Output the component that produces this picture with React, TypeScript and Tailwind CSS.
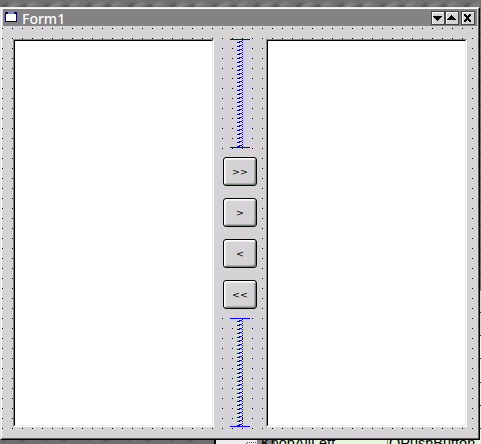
import React from "react";

function Spring({ id }: { id: string }) {
  return (
    <svg width="20" height="109" className="block shrink-0" shapeRendering="crispEdges">
      <defs>
        <pattern id={id} x="7" y="1" width="6" height="4" patternUnits="userSpaceOnUse">
          <path d="M0 3h2v1h-2zM2 0h2v1h-2zM5 1h1v1h-1z" fill="#fff" />
          <path d="M5 0h1v1h-1zM2 1h3v1h-3zM0 2h3v1h-3zM5 2h1v1h-1z" fill="#0000ff" />
        </pattern>
      </defs>
      <rect x="7" y="1" width="6" height="107" fill={`url(#${id})`} />
      <path d="M0 0h20v1h-20zM0 108h20v1h-20z" fill="#0000ff" />
    </svg>
  );
}

function ListPanel() {
  return (
    <div className="h-[388px] w-[201px] shrink-0 border border-t-[#848284] border-r-white border-b-white border-l-[#848284]">
      <div className="h-full border border-t-black border-r-[#efebef] border-b-[#efebef] border-l-black bg-white" />
    </div>
  );
}

function MoveButton({ dir, double }: { dir: "left" | "right"; double?: boolean }) {
  const label = (dir === "right" ? ">" : "<").repeat(double ? 2 : 1);
  return (
    <button className="flex h-[29px] w-[34px] shrink-0 items-center justify-center rounded-[3px] border border-black bg-[#d6d3d6] pt-px font-['DejaVu_Sans',sans-serif] text-[9.5px] leading-none text-black shadow-[inset_1px_1px_0_#fff,inset_-1px_-1px_0_#738173,inset_2px_2px_0_#efebef,inset_-2px_-2px_0_#adaaad]">
      {label}
    </button>
  );
}

function TitleButton({ kind }: { kind: "down" | "up" | "close" }) {
  const paths = {
    down: "M2 5h9v1h-1v1h-1v1h-1v1h-1v1h-1v-1h-1v-1h-1v-1h-1v-1h-1z",
    up: "M6 4h1v1h1v1h1v1h1v1h1v1h-9v-1h1v-1h1v-1h1v-1h1z",
    close: "M3 3h2v1h1v1h1v-1h1v-1h2v2h-1v1h-1v2h1v1h1v2h-2v-1h-1v-1h-1v1h-1v1h-2v-2h1v-1h1v-2h-1v-1h-1z",
  };
  return (
    <svg width="14" height="14" className="block" shapeRendering="crispEdges">
      <rect width="14" height="14" fill="#424542" />
      <rect x="1" y="1" width="12" height="12" fill="#fff" />
      <rect x="2" y="2" width="11" height="11" fill="#d6d3d6" />
      <path d={paths[kind]} fill="#000" />
    </svg>
  );
}

export default function App() {
  return (
    <div className="relative h-[444px] w-[481px] overflow-hidden bg-[#6b6d6b]">
      <svg width="481" height="444" className="absolute inset-0">
        <defs>
          <filter id="soft" x="-20%" y="-40%" width="140%" height="180%">
            <feGaussianBlur stdDeviation="1.3" />
          </filter>
          <pattern id="stone" width="42" height="12" patternUnits="userSpaceOnUse">
            <rect width="42" height="12" fill="#6f706f" />
            <g filter="url(#soft)">
              <path d="M6 7L16 2L21 3L12 8zM25 5L34 2L39 3L30 7z" fill="#848584" />
              <path d="M1 7L6 3L9 4L4 9zM18 8L25 4L28 6L21 10z" fill="#525452" />
            </g>
          </pattern>
        </defs>
        <rect width="481" height="444" fill="url(#stone)" />
        <rect x="214" y="439" width="267" height="5" fill="#e7f7de" />
        <rect x="214" y="439" width="2" height="5" />
        <rect x="216" y="439" width="42" height="5" fill="#efebef" />
        <path d="M246.500 444v-1.500h10" fill="none" stroke="#555" strokeDasharray="1 1" />
        <rect x="257" y="439" width="18" height="5" fill="#848584" />
        <rect x="480" y="291" width="1" height="44" fill="#d6d3d6" />
        <rect x="480" y="335" width="1" height="109" fill="#e7f7de" />
        <path d="M480 312.500h1M480 335.500h1M480 358.500h1M480 382.500h1M480 405.500h1M480 428.500h1" stroke="#333" />
      </svg>
      <div className="absolute top-[436px] left-[261px] flex font-['Liberation_Sans',sans-serif] text-[14.5px] leading-[14px] text-black">
        <span className="w-[126px]">KnopAllLeft</span>
        <span className="border-l border-[#848284] pl-px">QPushButton</span>
      </div>
      <div className="absolute top-[7px] left-0 h-[433px] w-[480px] border border-t-[#efebef] border-r-black border-b-black border-l-[#e7e3e7]">
        <div className="flex h-full flex-col border border-t-white border-r-[#5a5d5a] border-b-[#5a5d5a] border-l-white bg-[#d6d3d6]">
          <header className="mr-px ml-px flex h-[17px] shrink-0 items-start bg-[#848284] pl-[2px]">
            <svg width="12" height="10" className="mt-[3px] block shrink-0" shapeRendering="crispEdges">
              <rect width="12" height="10" fill="#000084" />
              <path d="M1 2h10v7H1z" fill="#fff" />
              <path d="M3 0h6v2H3z" fill="#8482bd" />
            </svg>
            <h1 className="mt-px ml-[5px] font-['Noto_Sans',sans-serif] text-[14px] leading-[17px] font-medium text-white">
              Form1
            </h1>
            <div className="mt-[2px] ml-auto flex pr-[2px]">
              <TitleButton kind="down" />
              <TitleButton kind="up" />
              <div className="ml-[2px]">
                <TitleButton kind="close" />
              </div>
            </div>
          </header>
          <main className="flex flex-1 bg-[conic-gradient(at_1px_1px,transparent_75%,#000_0)] bg-[length:10px_10px] bg-[position:0px_2px] pt-[13px] pl-[11px]">
            <ListPanel />
            <div className="flex w-[52px] shrink-0 flex-col items-center">
              <Spring id="coilTop" />
              <div className="mt-px flex w-[44px] flex-col gap-3 self-start bg-[#d6d3d6] pt-2 pb-[9px] pl-[9px]">
                <MoveButton dir="right" double />
                <MoveButton dir="right" />
                <MoveButton dir="left" />
                <MoveButton dir="left" double />
              </div>
              <Spring id="coilBottom" />
            </div>
            <ListPanel />
          </main>
        </div>
      </div>
    </div>
  );
}
